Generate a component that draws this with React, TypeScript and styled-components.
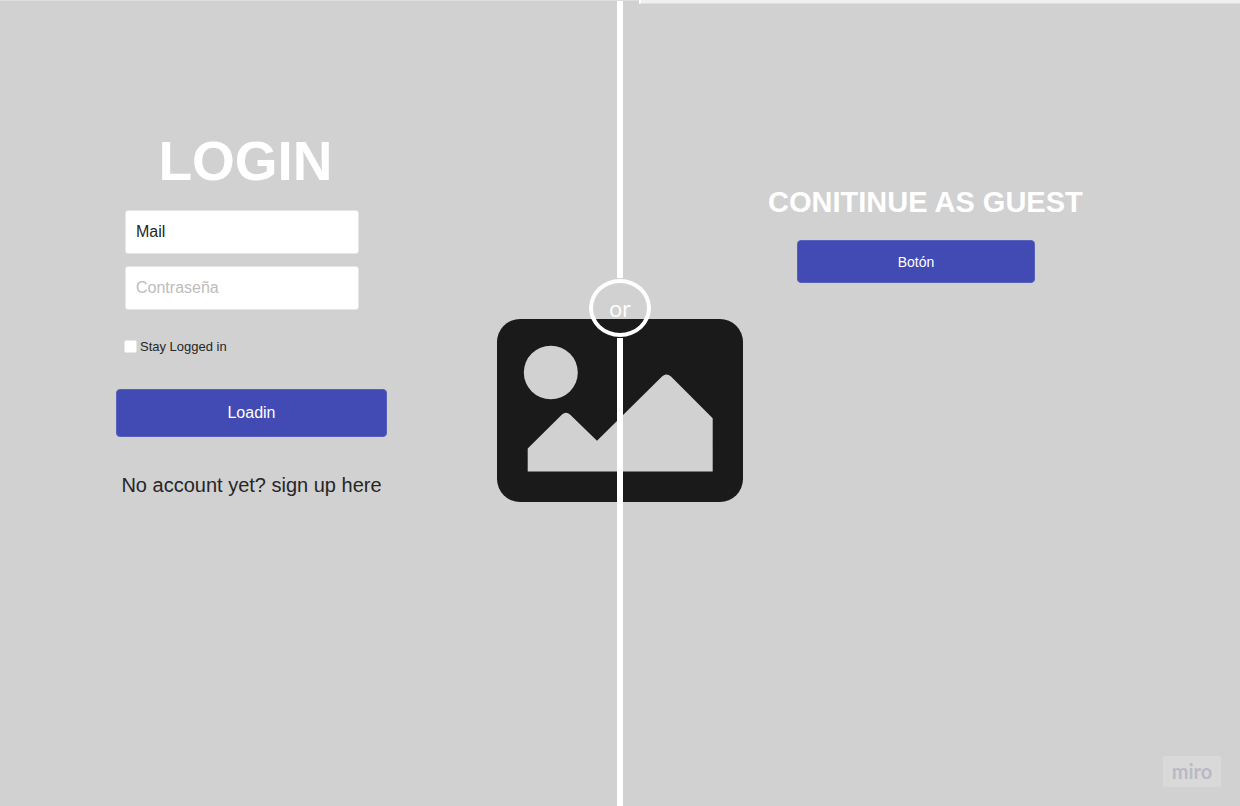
import React from "react";
import styled, { createGlobalStyle } from "styled-components";

const GlobalStyle = createGlobalStyle`
  *, *::before, *::after { box-sizing: border-box; }
  body {
    margin: 0;
    background: #d1d1d1;
    color: #262626;
    font-family: "Liberation Sans", Arial, sans-serif;
  }
`;

const Page = styled.main`
  position: relative;
  display: grid;
  grid-template-columns: 1fr 246px 1fr;
  min-height: 100vh;
  border-top: 1px solid #dedede;
`;

const TopStrip = styled.div`
  position: absolute;
  top: -1px;
  right: 0;
  left: calc(50% + 19px);
  height: 4px;
  background: #f0f0f0;
  border-left: 2px solid #fff;
  border-bottom: 1px solid #dedede;
`;

const LoginPanel = styled.form`
  display: flex;
  flex-direction: column;
  padding: 128px 110px 0 116px;
`;

const LoginTitle = styled.h1`
  margin: 0 12px 17px 0;
  color: #fff;
  font-size: 55px;
  line-height: 64px;
  text-align: center;
`;

const Fields = styled.div`
  display: flex;
  flex-direction: column;
  gap: 12px;
  padding: 0 28px 0 9px;
`;

const Field = styled.input`
  width: 100%;
  height: 44px;
  padding: 0 10px;
  border: 1px solid #e6e6e6;
  border-radius: 3px;
  background: #fff;
  color: #262626;
  font-family: inherit;
  font-size: 16px;

  &::placeholder {
    color: #bdbdbd;
    opacity: 1;
  }
`;

const StayLabel = styled.label`
  display: flex;
  align-items: center;
  gap: 3px;
  margin: 28px 0 34px 8px;
  font-size: 13px;
  line-height: 17px;
`;

const Checkbox = styled.input`
  appearance: none;
  width: 13px;
  height: 13px;
  margin: 0;
  border: 1px solid #e8e8e8;
  border-radius: 2px;
  background: #fff;

  &:checked {
    background: #424ab3;
  }
`;

const Button = styled.button<{ $size: "large" | "small" }>`
  width: 100%;
  height: ${({ $size }) => ($size === "large" ? 48 : 43)}px;
  padding: 0;
  border: 1px solid #5860bd;
  border-radius: 4px;
  background: #424ab3;
  color: #fff;
  font-family: inherit;
  font-size: ${({ $size }) => ($size === "large" ? 16 : 14)}px;
  cursor: pointer;
`;

const SignUpLink = styled.a`
  margin-top: 36px;
  color: #262626;
  font-size: 20px;
  line-height: 24px;
  text-align: center;
  text-decoration: none;
`;

const Divider = styled.div`
  position: relative;
  display: flex;
  flex-direction: column;
  align-items: center;
`;

const Line = styled.div<{ $fill?: boolean }>`
  z-index: 1;
  width: 6px;
  height: 277px;
  flex: ${({ $fill }) => ($fill ? "1 0 auto" : "none")};
  background: #fff;
`;

const OrBadge = styled.div`
  z-index: 1;
  display: flex;
  align-items: center;
  justify-content: center;
  width: 62px;
  height: 58px;
  margin: 1px 0;
  border: 4px solid #fff;
  border-radius: 50%;
  color: #fff;
  font-family: "Open Sans", "Noto Sans", sans-serif;
  font-size: 22px;
`;

const Picture = styled.svg`
  position: absolute;
  top: 318px;
  left: 0;
  width: 246px;
  height: 183px;
`;

const GuestPanel = styled.section`
  padding: 183px 150px 0 25px;
`;

const GuestTitle = styled.h2`
  margin: 0 0 20px;
  color: #fff;
  font-size: 29px;
  line-height: 36px;
  white-space: nowrap;
`;

const GuestAction = styled.div`
  max-width: 267px;
  padding-left: 29px;
`;

const Watermark = styled.div`
  position: absolute;
  right: 19px;
  bottom: 19px;
  display: flex;
  align-items: center;
  justify-content: center;
  width: 58px;
  height: 31px;
  padding-bottom: 2px;
  border-radius: 2px;
  background: #d9d9d9;
  color: #b9b9c6;
  font-family: Lato, sans-serif;
  font-size: 20px;
  font-weight: 700;
`;

export default function App() {
  return (
    <>
      <GlobalStyle />
      <Page>
        <TopStrip />
        <LoginPanel onSubmit={(e) => e.preventDefault()}>
          <LoginTitle>LOGIN</LoginTitle>
          <Fields>
            <Field type="text" aria-label="Mail" defaultValue="Mail" />
            <Field type="password" aria-label="Contraseña" placeholder="Contraseña" />
          </Fields>
          <StayLabel>
            <Checkbox type="checkbox" />
            Stay Logged in
          </StayLabel>
          <Button type="submit" $size="large">Loadin</Button>
          <SignUpLink href="#signup">No account yet? sign up here</SignUpLink>
        </LoginPanel>

        <Divider>
          <Picture viewBox="0 0 246 183" aria-hidden="true">
            <rect width="246" height="183" rx="23" fill="#1a1a1a" />
            <ellipse cx="53.8" cy="53.5" rx="27" ry="26.7" fill="#d1d1d1" />
            <path
              d="M30.7 129.5 65 95.500Q69 92 73 95.500L100 121.800 165 57.500Q169.500 53.500 174 57.500L215.700 99.200V152.500H30.700Z"
              fill="#d1d1d1"
            />
          </Picture>
          <Line />
          <OrBadge>or</OrBadge>
          <Line $fill />
        </Divider>

        <GuestPanel>
          <GuestTitle>CONITINUE AS GUEST</GuestTitle>
          <GuestAction>
            <Button type="button" $size="small">Botón</Button>
          </GuestAction>
        </GuestPanel>

        <Watermark>miro</Watermark>
      </Page>
    </>
  );
}
